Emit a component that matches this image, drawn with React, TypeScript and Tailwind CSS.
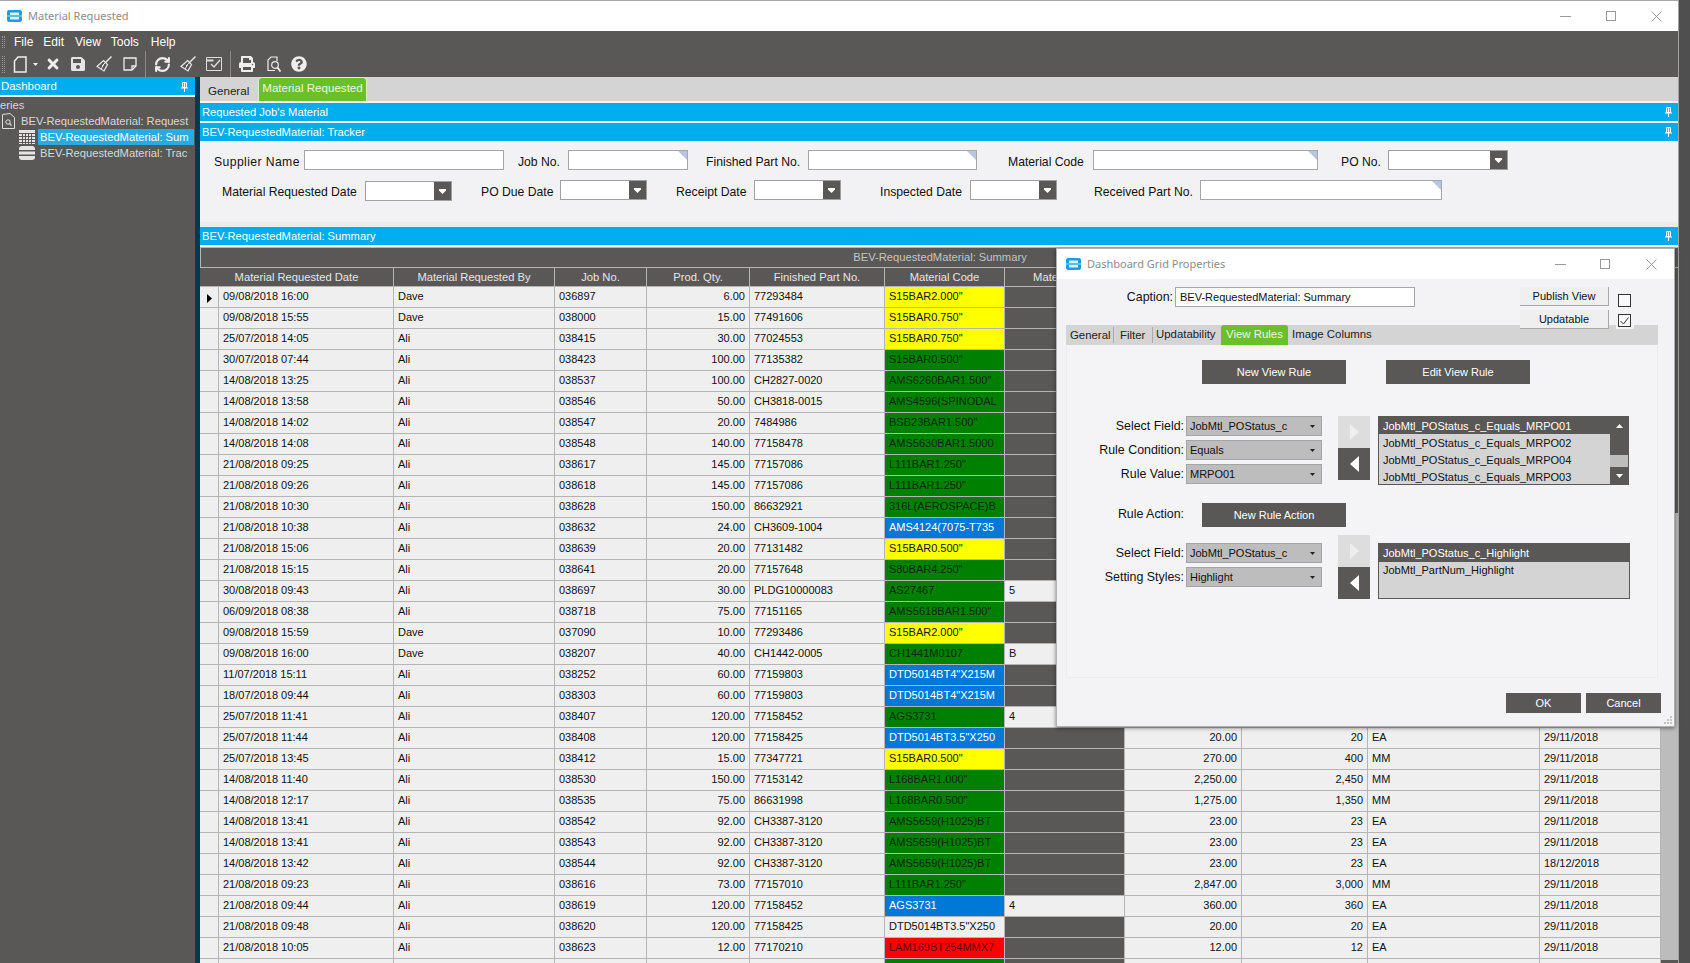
import { RefreshCw } from 'lucide-react';
import { FaPrint, FaQuestionCircle, FaSave, FaTimes } from 'react-icons/fa';

type Row = [string, string, string, string, string, string, string, string?, string?, string?, string?, string?];

const rows: Row[] = [
  ['09/08/2018 16:00', 'Dave', '036897', '6.00', '77293484', 'S15BAR2.000"', 'y'],
  ['09/08/2018 15:55', 'Dave', '038000', '15.00', '77491606', 'S15BAR0.750"', 'y'],
  ['25/07/2018 14:05', 'Ali', '038415', '30.00', '77024553', 'S15BAR0.750"', 'y'],
  ['30/07/2018 07:44', 'Ali', '038423', '100.00', '77135382', 'S15BAR0.500"', 'g'],
  ['14/08/2018 13:25', 'Ali', '038537', '100.00', 'CH2827-0020', 'AMS6260BAR1.500"', 'g'],
  ['14/08/2018 13:58', 'Ali', '038546', '50.00', 'CH3818-0015', 'AMS4596(SPINODAL', 'g'],
  ['14/08/2018 14:02', 'Ali', '038547', '20.00', '7484986', 'BSB23BAR1.500"', 'g'],
  ['14/08/2018 14:08', 'Ali', '038548', '140.00', '77158478', 'AMS5630BAR1.5000', 'g'],
  ['21/08/2018 09:25', 'Ali', '038617', '145.00', '77157086', 'L111BAR1.250"', 'g'],
  ['21/08/2018 09:26', 'Ali', '038618', '145.00', '77157086', 'L111BAR1.250"', 'g'],
  ['21/08/2018 10:30', 'Ali', '038628', '150.00', '86632921', '316L(AEROSPACE)B', 'g'],
  ['21/08/2018 10:38', 'Ali', '038632', '24.00', 'CH3609-1004', 'AMS4124(7075-T735', 'b'],
  ['21/08/2018 15:06', 'Ali', '038639', '20.00', '77131482', 'S15BAR0.500"', 'y'],
  ['21/08/2018 15:15', 'Ali', '038641', '20.00', '77157648', 'S80BAR4.250"', 'g'],
  ['30/08/2018 09:43', 'Ali', '038697', '30.00', 'PLDG10000083', 'AS27467', 'g', '5'],
  ['06/09/2018 08:38', 'Ali', '038718', '75.00', '77151165', 'AMS5618BAR1.500"', 'g'],
  ['09/08/2018 15:59', 'Dave', '037090', '10.00', '77293486', 'S15BAR2.000"', 'y'],
  ['09/08/2018 16:00', 'Dave', '038207', '40.00', 'CH1442-0005', 'CH1441M0107', 'g', 'B'],
  ['11/07/2018 15:11', 'Ali', '038252', '60.00', '77159803', 'DTD5014BT4"X215M', 'b'],
  ['18/07/2018 09:44', 'Ali', '038303', '60.00', '77159803', 'DTD5014BT4"X215M', 'b'],
  ['25/07/2018 11:41', 'Ali', '038407', '120.00', '77158452', 'AGS3731', 'g', '4'],
  ['25/07/2018 11:44', 'Ali', '038408', '120.00', '77158425', 'DTD5014BT3.5"X250', 'b', '', '20.00', '20', 'EA', '29/11/2018'],
  ['25/07/2018 13:45', 'Ali', '038412', '15.00', '77347721', 'S15BAR0.500"', 'y', '', '270.00', '400', 'MM', '29/11/2018'],
  ['14/08/2018 11:40', 'Ali', '038530', '150.00', '77153142', 'L168BAR1.000"', 'g', '', '2,250.00', '2,450', 'MM', '29/11/2018'],
  ['14/08/2018 12:17', 'Ali', '038535', '75.00', '86631998', 'L168BAR0.500"', 'g', '', '1,275.00', '1,350', 'MM', '29/11/2018'],
  ['14/08/2018 13:41', 'Ali', '038542', '92.00', 'CH3387-3120', 'AMS5659(H1025)BT', 'g', '', '23.00', '23', 'EA', '29/11/2018'],
  ['14/08/2018 13:41', 'Ali', '038543', '92.00', 'CH3387-3120', 'AMS5659(H1025)BT', 'g', '', '23.00', '23', 'EA', '29/11/2018'],
  ['14/08/2018 13:42', 'Ali', '038544', '92.00', 'CH3387-3120', 'AMS5659(H1025)BT', 'g', '', '23.00', '23', 'EA', '18/12/2018'],
  ['21/08/2018 09:23', 'Ali', '038616', '73.00', '77157010', 'L111BAR1.250"', 'g', '', '2,847.00', '3,000', 'MM', '29/11/2018'],
  ['21/08/2018 09:44', 'Ali', '038619', '120.00', '77158452', 'AGS3731', 'b', '4', '360.00', '360', 'EA', '29/11/2018'],
  ['21/08/2018 09:48', 'Ali', '038620', '120.00', '77158425', 'DTD5014BT3.5"X250', 'n', '', '20.00', '20', 'EA', '29/11/2018'],
  ['21/08/2018 10:05', 'Ali', '038623', '12.00', '77170210', 'LAM169BT254MMX7', 'r', '', '12.00', '12', 'EA', '29/11/2018'],
  ['', '', '', '', '', '', 'g'],
];

const codeBg: Record<string, string> = {
  y: 'bg-[#ffff00] text-[#111]',
  g: 'bg-[#008000] text-[#002a00]',
  b: 'bg-[#0078d7] text-white',
  r: 'bg-[#ff0000] text-[#5a0000]',
  n: 'bg-[#efefef] text-[#111]',
};

const gridCols = 'grid grid-cols-[19px_175px_161px_92px_103px_135px_120px_120px_117px_126px_172px_121px]';
const headers = ['Material Requested By', 'Job No.', 'Prod. Qty.', 'Finished Part No.', 'Material Code', 'Material Rev', '', '', '', ''];

function AppLogo() {
  return (
    <svg width="15" height="12" viewBox="0 0 15 12" className="shrink-0">
      <rect x="0" y="0" width="15" height="12" rx="2" fill="#1c9fdc" />
      <rect x="3" y="2.5" width="9" height="7" fill="#d9f1fb" />
      <rect x="0" y="5" width="15" height="2" fill="#58bfe8" />
    </svg>
  );
}

function Pin() {
  return (
    <svg width="7" height="10" viewBox="0 0 7 10" className="shrink-0">
      <path d="M1.5 0.5h4v5h-4z" fill="none" stroke="#fff" />
      <path d="M0 6h7M3.5 6v4" stroke="#fff" />
      <path d="M3.5 1v4" stroke="#fff" strokeWidth="1.4" />
    </svg>
  );
}

function Broom() {
  return (
    <svg width="16" height="16" viewBox="0 0 16 16" fill="none" stroke="#e8e8e8" className="shrink-0">
      <path d="M15.5 0.5 9.5 6.5" strokeWidth="1.4" />
      <path d="M7.5 4.5 11.5 8.5 8 15 1 10.5Z" strokeWidth="1.2" />
      <path d="M6 10 9 7M5 13 7.5 9" strokeWidth="1" />
    </svg>
  );
}

function Toolbar() {
  return (
    <div className="flex items-center h-[24px] pl-[2px]">
      <div className="w-[3px] h-[17px] border-x border-dotted border-[#999]" />
      <svg width="14" height="17" viewBox="0 0 14 17" fill="none" stroke="#eee" strokeWidth="1.5" className="ml-[8px] shrink-0">
        <path d="M5 1h8v15H1.500V5Z" />
      </svg>
      <svg width="5" height="3" viewBox="0 0 5 3" className="ml-[6px] shrink-0"><path d="M0 0h5L2.500 3Z" fill="#eee" /></svg>
      <FaTimes size={16} color="#eee" className="ml-[7px] shrink-0" />
      <FaSave size={16} color="#e4e4e4" className="ml-[9px] shrink-0" />
      <div className="ml-[10px]"><Broom /></div>
      <svg width="14" height="14" viewBox="0 0 14 14" fill="none" stroke="#eee" strokeWidth="1.3" className="ml-[11px] shrink-0">
        <path d="M1 1h12v8l-4 4H1Z" />
        <path d="M9 13V9h4" />
      </svg>
      <div className="ml-[8px] w-[1px] h-[26px] bg-[#8a8a8a]" />
      <RefreshCw size={17} color="#eee" strokeWidth={3} className="ml-[8px] shrink-0" />
      <div className="ml-[9px]"><Broom /></div>
      <svg width="16" height="14" viewBox="0 0 16 14" fill="none" stroke="#ddd" className="ml-[10px] shrink-0">
        <path d="M0.500 0.500h15v13h-15z" />
        <path d="M0.500 3.500h7" strokeWidth="2" />
        <path d="M5 7l3 3 6-7" strokeWidth="1.4" />
      </svg>
      <div className="ml-[8px] w-[1px] h-[26px] bg-[#8a8a8a]" />
      <FaPrint size={16} color="#eee" className="ml-[8px] shrink-0" />
      <svg width="14" height="17" viewBox="0 0 14 17" fill="none" stroke="#eee" strokeWidth="1.2" className="ml-[12px] shrink-0">
        <path d="M8 14.500H1V4L4 1h6v4" />
        <circle cx="8" cy="9" r="3.300" />
        <path d="M10.500 11.500 13.500 15.500" strokeWidth="1.8" />
      </svg>
      <FaQuestionCircle size={16} color="#eee" className="ml-[10px] shrink-0" />
    </div>
  );
}

function Sidebar() {
  return (
    <div className="w-[195px] shrink-0 bg-[#595856] overflow-hidden">
      <div className="h-[18px] bg-[#00adef] text-white flex items-center justify-between pl-[1px] pr-[7px] pt-[1px] text-[11.4px]">
        <span>Dashboard</span>
        <Pin />
      </div>
      <div className="h-[2px] bg-[#f2f2f2]" />
      <div className="text-[#d8d8d8] text-[11.2px]">
        <div className="h-[16px] flex items-center">eries</div>
        <div className="h-[16px] flex items-center pl-[2px]">
          <svg width="13" height="16" viewBox="0 0 13 16" fill="none" stroke="#ddd" className="shrink-0">
            <path d="M0.500 1.500 8 0.500l4.500 4v11h-12z" />
            <circle cx="6" cy="9" r="2.200" />
            <path d="M7.500 10.500 9.500 12.500" strokeWidth="1.300" />
          </svg>
          <span className="ml-[6px] whitespace-nowrap">BEV-RequestedMaterial: Request</span>
        </div>
        <div className="h-[16px] flex items-center pl-[19px]">
          <svg width="16" height="14" viewBox="0 0 16 14" className="shrink-0">
            <rect width="16" height="14" fill="#e4e4e4" />
            <path d="M0 3.500h16M0 6.500h16M0 9.500h16M0 12.500h16M3.500 3v11M6.500 3v11M9.500 3v11M12.500 3v11" stroke="#595856" />
          </svg>
          <div className="ml-[3px] w-[156px] h-[16px] bg-[#29abe2] text-white pl-[2px] whitespace-nowrap leading-[16px]">BEV-RequestedMaterial: Sum</div>
        </div>
        <div className="h-[16px] flex items-center pl-[19px]">
          <svg width="16" height="14" viewBox="0 0 16 14" className="shrink-0">
            <path d="M3 0h10a3 3 0 0 1 3 3v1H0V3a3 3 0 0 1 3-3ZM0 5.500h16v3H0ZM0 10h16v1a3 3 0 0 1-3 3H3a3 3 0 0 1-3-3Z" fill="#e4e4e4" />
          </svg>
          <div className="ml-[5px] whitespace-nowrap">BEV-RequestedMaterial: Trac</div>
        </div>
      </div>
    </div>
  );
}

function SectionBar({ title }: { title: string }) {
  return (
    <div className="h-[18px] shrink-0 bg-[#00adef] text-white text-[11.2px] flex items-center justify-between pl-[2px] pr-[6px]">
      <span>{title}</span>
      <Pin />
    </div>
  );
}

function TextBox({ width, corner }: { width: string; corner?: boolean }) {
  return (
    <div className={`relative ${width} h-[20px] shrink-0 bg-white border border-[#a6a6a6]`}>
      {corner && <div className="absolute top-0 right-0 w-[9px] h-[9px] bg-[#b3c7e2] [clip-path:polygon(0_0,100%_0,100%_100%)]" />}
    </div>
  );
}

function DropBox({ width, extra }: { width: string; extra?: string }) {
  return (
    <div className={`${width} ${extra ?? ''} h-[20px] shrink-0 flex justify-end bg-white border border-[#a0a0a0]`}>
      <div className="w-[17px] bg-[#595856] flex items-center justify-center">
        <svg width="7" height="5" viewBox="0 0 7 5"><path d="M0 0h7v1.500L3.500 5 0 1.500Z" fill="#fff" /></svg>
      </div>
    </div>
  );
}

function FilterLabel({ children, className }: { children: string; className: string }) {
  return <span className={`${className} shrink-0 pt-[4px] text-[12.2px] text-[#111] whitespace-nowrap`}>{children}</span>;
}

function FilterPanel() {
  return (
    <div className="h-[81px] shrink-0 bg-[#f2f2f4] pt-[9px]">
      <div className="flex h-[20px] items-center">
        <FilterLabel className="ml-[14px] w-[90px] tracking-[0.4px]">Supplier Name</FilterLabel>
        <TextBox width="w-[200px]" />
        <FilterLabel className="ml-[14px] w-[50px]">Job No.</FilterLabel>
        <TextBox width="w-[120px]" corner />
        <FilterLabel className="ml-[18px] w-[102px]">Finished Part No.</FilterLabel>
        <TextBox width="w-[169px]" corner />
        <FilterLabel className="ml-[31px] w-[85px]">Material Code</FilterLabel>
        <TextBox width="w-[225px]" corner />
        <FilterLabel className="ml-[23px] w-[47px]">PO No.</FilterLabel>
        <DropBox width="w-[120px]" />
      </div>
      <div className="flex h-[20px] items-center mt-[10px]">
        <FilterLabel className="ml-[22px] w-[143px]">Material Requested Date</FilterLabel>
        <DropBox width="w-[87px]" extra="mt-[2px]" />
        <FilterLabel className="ml-[29px] w-[79px]">PO Due Date</FilterLabel>
        <DropBox width="w-[87px]" />
        <FilterLabel className="ml-[29px] w-[78px]">Receipt Date</FilterLabel>
        <DropBox width="w-[87px]" />
        <FilterLabel className="ml-[39px] w-[90px]">Inspected Date</FilterLabel>
        <DropBox width="w-[87px]" />
        <FilterLabel className="ml-[37px] w-[106px]">Received Part No.</FilterLabel>
        <TextBox width="w-[242px]" corner />
      </div>
    </div>
  );
}

function Cell({ children, right, className }: { children: string; right?: boolean; className?: string }) {
  return (
    <div className={`border-r border-b border-[#b5b5b5] px-[4px] pb-[2px] flex items-center whitespace-nowrap ${right ? 'justify-end' : ''} ${className ?? ''}`}>
      {children}
    </div>
  );
}

function Grid() {
  return (
    <div className="flex-1 min-h-0 flex overflow-hidden bg-[#595856]">
      <div className="w-[1461px] shrink-0 text-[11px]">
        <div className="h-[21px] border-y border-[#b5b5b5] border-l flex items-center justify-center text-[#c4c4c4] text-[11.2px] w-[1479px] pb-[1px]">
          BEV-RequestedMaterial: Summary
        </div>
        <div className={`${gridCols} h-[19px]`}>
          <div className="col-span-2 border-r border-b border-[#b5b5b5] text-[#e6e6e6] text-[11.2px] flex items-center justify-center whitespace-nowrap">Material Requested Date</div>
          {headers.map((h, i) => (
            <div key={i} className="border-r border-b border-[#b5b5b5] text-[#e6e6e6] text-[11.2px] flex items-center justify-center whitespace-nowrap">{h}</div>
          ))}
        </div>
        {rows.map((r, i) => (
          <div key={i} className={`${gridCols} h-[21px] bg-[#efefef] text-[#111]`}>
            <div className="border-r border-b border-[#b5b5b5] flex items-center justify-center">
              {i === 0 && <svg width="5" height="9" viewBox="0 0 5 9" className="mt-[3px]"><path d="M0 0 5 4.500 0 9Z" fill="#000" /></svg>}
            </div>
            <Cell>{r[0]}</Cell>
            <Cell>{r[1]}</Cell>
            <Cell>{r[2]}</Cell>
            <Cell right>{r[3]}</Cell>
            <Cell>{r[4]}</Cell>
            <Cell className={codeBg[r[6]]}>{r[5]}</Cell>
            <Cell className={r[7] ? '' : 'bg-[#595856]'}>{r[7] ?? ''}</Cell>
            <Cell right>{r[8] ?? ''}</Cell>
            <Cell right>{r[9] ?? ''}</Cell>
            <Cell>{r[10] ?? ''}</Cell>
            <Cell>{r[11] ?? ''}</Cell>
          </div>
        ))}
      </div>
      <div className="flex-1 flex flex-col mt-[21px]">
        <div className="h-[245px] bg-[#595856]" />
        <div className="flex-1 bg-[#bcbcbc]" />
        <div className="h-[3px] bg-[#595856]" />
      </div>
    </div>
  );
}

function DarkButton({ label, width, height }: { label: string; width: string; height: string }) {
  return <div className={`${width} ${height} shrink-0 bg-[#595856] text-white text-[11px] flex items-center justify-center`}>{label}</div>;
}

function SelectRow({ label, value }: { label: string; value: string }) {
  return (
    <div className="flex items-center h-[20px]">
      <span className="w-[117px] text-right text-[12.4px] text-[#111] whitespace-nowrap">{label}</span>
      <div className="ml-[2px] w-[136px] h-[20px] bg-[#bdbdbd] border border-[#a4a4a4] flex items-center justify-between pl-[3px] pr-[6px] text-[11px] text-[#111]">
        <span>{value}</span>
        <svg width="5" height="3" viewBox="0 0 5 3"><path d="M0 0h5L2.500 3Z" fill="#222" /></svg>
      </div>
    </div>
  );
}

function ArrowPair({ extra }: { extra?: string }) {
  return (
    <div className={`ml-[16px] w-[32px] shrink-0 flex flex-col ${extra ?? ''}`}>
      <div className="h-[32px] bg-[#dddddd] flex items-center justify-center">
        <svg width="9" height="16" viewBox="0 0 9 16"><path d="M0 0 9 8 0 16Z" fill="#eeeeee" /></svg>
      </div>
      <div className="h-[32px] bg-[#595856] flex items-center justify-center">
        <svg width="9" height="16" viewBox="0 0 9 16"><path d="M9 0 0 8 9 16Z" fill="#fff" /></svg>
      </div>
    </div>
  );
}

function Dialog() {
  return (
    <div className="absolute left-[1056px] top-[248px] w-[619px] h-[479px] flex flex-col bg-[#f3f3f5] border border-[#b0b0b0] shadow-[0_1px_4px_rgba(0,0,0,0.5)]">
      <div className="h-[30px] shrink-0 bg-white flex items-center pl-[9px] pr-[17px]">
        <AppLogo />
        <span className="ml-[6px] text-[#8c8c8c] text-[11px] font-['Noto_Sans',sans-serif]">Dashboard Grid Properties</span>
        <svg width="11" height="1" viewBox="0 0 11 1" className="ml-auto"><path d="M0 .5h11" stroke="#999" /></svg>
        <svg width="10" height="10" viewBox="0 0 10 10" className="ml-[34px]"><rect x=".5" y=".5" width="9" height="9" fill="none" stroke="#999" /></svg>
        <svg width="11" height="11" viewBox="0 0 11 11" className="ml-[36px]"><path d="M.5.5l10 10M10.500.5l-10 10" stroke="#999" /></svg>
      </div>

      <div className="h-[46px] shrink-0 flex pt-[8px]">
        <span className="ml-[60px] w-[56px] text-right text-[12.4px] text-[#111] pt-[1px]">Caption:</span>
        <div className="ml-[2px] w-[240px] h-[20px] bg-white border border-[#a6a6a6] text-[11px] text-[#111] pl-[4px] leading-[18px]">BEV-RequestedMaterial: Summary</div>
        <div className="relative z-10 ml-[105px] flex flex-col">
          <div className="flex h-[19px]">
            <div className="w-[89px] bg-[#efefef] border-r border-b border-[#a8a8a8] text-[11px] text-[#111] flex items-center justify-center">Publish View</div>
            <div className="ml-[9px] mt-[7px] w-[13px] h-[13px] bg-[#f8f8f8] border border-[#333]" />
          </div>
          <div className="flex h-[19px] mt-[4px]">
            <div className="w-[89px] bg-[#efefef] border-r border-b border-[#a8a8a8] text-[11px] text-[#111] flex items-center justify-center">Updatable</div>
            <div className="ml-[7px] w-[18px] h-[19px] bg-[#f3f3f5] pl-[2px] pt-[4px]">
              <div className="w-[13px] h-[13px] bg-[#f8f8f8] border border-[#333] flex items-center justify-center">
                <svg width="9" height="8" viewBox="0 0 9 8" fill="none"><path d="M.5 4l3 3 5-6.500" stroke="#333" /></svg>
              </div>
            </div>
          </div>
        </div>
      </div>

      <div className="mx-[9px] w-[592px] h-[20px] shrink-0 bg-[#d4d4d4] flex items-center text-[11.4px] text-[#222]">
        <div className="w-[48px] h-[16px] pl-[4px] border-r border-[#aaa] leading-[16px]">General</div>
        <div className="w-[39px] h-[16px] pl-[6px] border-r border-[#aaa] leading-[16px]">Filter</div>
        <div className="w-[68px] pl-[3px]">Updatability</div>
        <div className="w-[67px] h-[20px] bg-[#6abf2b] rounded-t-[3px] text-[#ebf7e0] flex items-center justify-center">View Rules</div>
        <div className="pl-[4px]">Image Columns</div>
      </div>

      <div className="mx-[9px] w-[592px] h-[333px] shrink-0 bg-[#f4f4f6] border border-t-0 border-[#ededef]">
        <div className="flex pl-[135px] pt-[15px]">
          <DarkButton label="New View Rule" width="w-[144px]" height="h-[24px]" />
          <DarkButton label="Edit View Rule" width="w-[144px] ml-[40px]" height="h-[24px]" />
        </div>

        <div className="flex mt-[32px] h-[69px]">
          <div className="flex flex-col gap-[4px]">
            <SelectRow label="Select Field:" value="JobMtl_POStatus_c" />
            <SelectRow label="Rule Condition:" value="Equals" />
            <SelectRow label="Rule Value:" value="MRPO01" />
          </div>
          <ArrowPair />
          <div className="ml-[8px] w-[251px] h-[69px] flex bg-[#d4d4d4] border border-[#595856] text-[11px] text-[#111]">
            <div className="flex-1 overflow-hidden">
              <div className="h-[17px] bg-[#595856] text-white pl-[4px] leading-[19px] whitespace-nowrap">JobMtl_POStatus_c_Equals_MRPO01</div>
              <div className="h-[17px] pl-[4px] leading-[19px] whitespace-nowrap">JobMtl_POStatus_c_Equals_MRPO02</div>
              <div className="h-[17px] pl-[4px] leading-[19px] whitespace-nowrap">JobMtl_POStatus_c_Equals_MRPO04</div>
              <div className="h-[17px] pl-[4px] leading-[19px] whitespace-nowrap">JobMtl_POStatus_c_Equals_MRPO03</div>
            </div>
            <div className="w-[18px] shrink-0 flex flex-col bg-[#595856]">
              <div className="h-[17px] flex items-center justify-center"><svg width="7" height="4" viewBox="0 0 7 4"><path d="M0 4h7L3.500 0Z" fill="#fff" /></svg></div>
              <div className="h-[21px]" />
              <div className="h-[12px] bg-[#bdbdbd]" />
              <div className="flex-1 flex items-center justify-center"><svg width="7" height="4" viewBox="0 0 7 4"><path d="M0 0h7L3.500 4Z" fill="#fff" /></svg></div>
            </div>
          </div>
        </div>

        <div className="flex items-center mt-[18px] h-[24px]">
          <span className="w-[117px] text-right text-[12.4px] text-[#111] pb-[1px]">Rule Action:</span>
          <DarkButton label="New Rule Action" width="w-[144px] ml-[18px]" height="h-[24px]" />
        </div>

        <div className="flex mt-[16px]">
          <div className="flex flex-col gap-[4px]">
            <SelectRow label="Select Field:" value="JobMtl_POStatus_c" />
            <SelectRow label="Setting Styles:" value="Highlight" />
          </div>
          <ArrowPair extra="-mt-[8px]" />
          <div className="ml-[8px] w-[252px] h-[56px] bg-[#d4d4d4] border border-[#595856] text-[11px] text-[#111]">
            <div className="h-[18px] bg-[#595856] text-white pl-[4px] leading-[19px]">JobMtl_POStatus_c_Highlight</div>
            <div className="h-[17px] pl-[4px] leading-[17px]">JobMtl_PartNum_Highlight</div>
          </div>
        </div>
      </div>

      <div className="flex justify-end gap-[5px] pr-[13px] mt-[15px]">
        <DarkButton label="OK" width="w-[75px]" height="h-[20px]" />
        <DarkButton label="Cancel" width="w-[75px]" height="h-[20px]" />
      </div>
      <svg width="8" height="8" viewBox="0 0 8 8" className="absolute right-[2px] bottom-[2px]">
        <path d="M6 0h2v2H6zM3 3h2v2H3zM6 3h2v2H6zM0 6h2v2H0zM3 6h2v2H3zM6 6h2v2H6z" fill="#c4c4c4" />
      </svg>
    </div>
  );
}

export default function App() {
  return (
    <div className="relative w-[1690px] h-[963px] overflow-hidden flex bg-[#4f4f4f] [font-family:'Liberation_Sans',sans-serif]">
      <div className="w-[1679px] h-full shrink-0 flex flex-col border-r border-[#a0a0a0]">
        <div className="h-[31px] shrink-0 bg-white border-t border-[#a8a8a8] flex items-center pl-[7px] pr-[16px]">
          <AppLogo />
          <span className="ml-[6px] text-[#8c8c8c] text-[11px] font-['Noto_Sans',sans-serif]">Material Requested</span>
          <svg width="11" height="1" viewBox="0 0 11 1" className="ml-auto"><path d="M0 .5h11" stroke="#999" /></svg>
          <svg width="10" height="10" viewBox="0 0 10 10" className="ml-[35px]"><rect x=".5" y=".5" width="9" height="9" fill="none" stroke="#999" /></svg>
          <svg width="11" height="11" viewBox="0 0 11 11" className="ml-[35px]"><path d="M.5.5l10 10M10.500.5l-10 10" stroke="#999" /></svg>
        </div>

        <div className="h-[46px] shrink-0 bg-[#595856] text-white text-[12px]">
          <div className="flex items-center h-[21px] pl-[2px]">
            <div className="w-[3px] h-[12px] border-x border-dotted border-[#999]" />
            <span className="ml-[9px]">File</span>
            <span className="ml-[10px]">Edit</span>
            <span className="ml-[11px]">View</span>
            <span className="ml-[10px]">Tools</span>
            <span className="ml-[12px]">Help</span>
          </div>
          <Toolbar />
        </div>

        <div className="flex-1 min-h-0 flex">
          <Sidebar />
          <div className="w-[5px] shrink-0 bg-[#00395a]" />
          <div className="flex-1 min-w-0 flex flex-col bg-[#f2f2f4]">
            <div className="h-[24px] shrink-0 bg-[#d4d4d4] flex items-end text-[11.6px]">
              <span className="ml-[8px] w-[50px] h-[20px] text-[#222] leading-[20px]">General</span>
              <div className="w-[109px] h-[24px] bg-[#6abf2b] rounded-t-[4px] border-x border-t border-[#d8f0c4] text-[#ebf7e0] text-center leading-[19px]">Material Requested</div>
            </div>
            <div className="h-[2px] shrink-0" />
            <SectionBar title="Requested Job's Material" />
            <div className="h-[2px] shrink-0" />
            <SectionBar title="BEV-RequestedMaterial: Tracker" />
            <FilterPanel />
            <div className="h-[5px] shrink-0 bg-[#ececee]" />
            <SectionBar title="BEV-RequestedMaterial: Summary" />
            <div className="h-[2px] shrink-0 bg-white" />
            <Grid />
          </div>
        </div>
      </div>
      <Dialog />
    </div>
  );
}
